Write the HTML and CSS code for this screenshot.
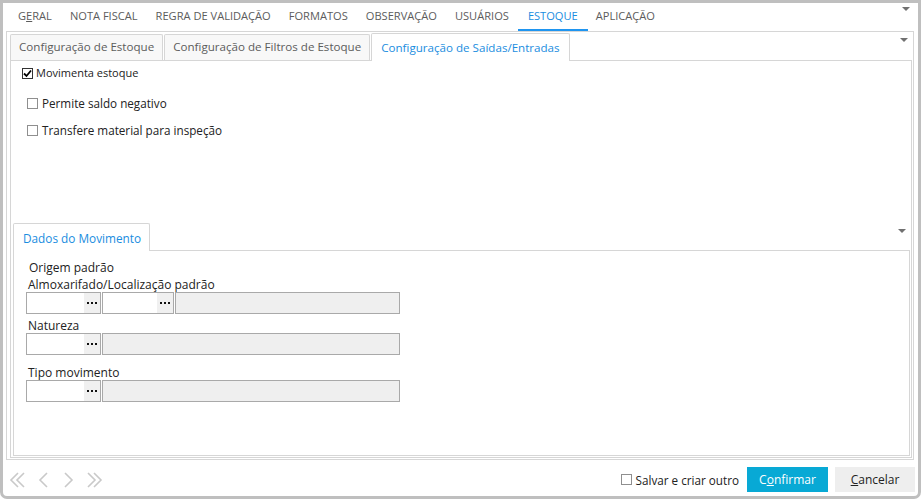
FILE: index.html
```html
<!DOCTYPE html>
<html lang="pt-BR">
<head>
    <meta charset="UTF-8">
    <meta name="viewport" content="width=device-width, initial-scale=1.0">
    <title>Estoque - Configuração</title>
    <link rel="stylesheet" href="styles.css">
</head>
<body>
    <div class="window">
        <div class="main-tabs">
            <span class="main-tab">G<u>E</u>RAL</span>
            <span class="main-tab">NOTA FISCAL</span>
            <span class="main-tab">REGRA DE VALIDAÇÃO</span>
            <span class="main-tab">FORMATOS</span>
            <span class="main-tab">OBSERVAÇÃO</span>
            <span class="main-tab">USUÁRIOS</span>
            <span class="main-tab active">ESTOQUE</span>
            <span class="main-tab">APLICAÇÃO</span>
            <span class="drop-arrow top"></span>
        </div>

        <div class="main-body">
            <div class="sub-tabs">
                <span class="sub-tab">Configuração de Estoque</span>
                <span class="sub-tab">Configuração de Filtros de Estoque</span>
                <span class="sub-tab active">Configuração de Saídas/Entradas</span>
                <span class="drop-arrow sub"></span>
            </div>

            <div class="sub-panel">
                <label class="check small">
                    <span class="box checked">
                        <svg width="9" height="9" viewBox="0 0 9 9"><path d="M1 4.5 L3.5 7 L8 1.5" fill="none" stroke="#000" stroke-width="1.8"/></svg>
                    </span>
                    Movimenta estoque
                </label>
                <label class="check indent">
                    <span class="box"></span>
                    Permite saldo negativo
                </label>
                <label class="check indent second">
                    <span class="box"></span>
                    Transfere material para inspeção
                </label>

                <div class="inner-tabs">
                    <span class="sub-tab active">Dados do Movimento</span>
                    <span class="drop-arrow inner"></span>
                </div>
                <div class="inner-panel">
                    <div class="field-title">Origem padrão</div>
                    <div class="field-label">Almoxarifado/Localização padrão</div>
                    <div class="field-row">
                        <div class="lookup"><span class="dots"><svg width="10" height="2" viewBox="0 0 10 2"><rect x="0" width="2" height="2"/><rect x="4" width="2" height="2"/><rect x="8" width="2" height="2"/></svg></span></div>
                        <div class="lookup narrow"><span class="dots"><svg width="10" height="2" viewBox="0 0 10 2"><rect x="0" width="2" height="2"/><rect x="4" width="2" height="2"/><rect x="8" width="2" height="2"/></svg></span></div>
                        <div class="readonly"></div>
                    </div>

                    <div class="field-label gap">Natureza</div>
                    <div class="field-row">
                        <div class="lookup"><span class="dots"><svg width="10" height="2" viewBox="0 0 10 2"><rect x="0" width="2" height="2"/><rect x="4" width="2" height="2"/><rect x="8" width="2" height="2"/></svg></span></div>
                        <div class="readonly"></div>
                    </div>

                    <div class="field-label gap-lg">Tipo movimento</div>
                    <div class="field-row">
                        <div class="lookup"><span class="dots"><svg width="10" height="2" viewBox="0 0 10 2"><rect x="0" width="2" height="2"/><rect x="4" width="2" height="2"/><rect x="8" width="2" height="2"/></svg></span></div>
                        <div class="readonly"></div>
                    </div>
                </div>
            </div>
        </div>

        <div class="footer">
            <div class="nav">
                <svg width="100" height="20" viewBox="0 0 100 20">
                    <g fill="none" stroke="#c9c9c9" stroke-width="1.6">
                        <path d="M9 3 L2 10 L9 17 M15 3 L8 10 L15 17"/>
                        <path d="M38 3 L31 10 L38 17"/>
                        <path d="M56 3 L63 10 L56 17"/>
                        <path d="M79 3 L86 10 L79 17 M85 3 L92 10 L85 17"/>
                    </g>
                </svg>
            </div>
            <label class="check save">
                <span class="box"></span>
                Salvar e criar outro
            </label>
            <button class="btn primary">C<u>o</u>nfirmar</button>
            <button class="btn"><u>C</u>ancelar</button>
        </div>
    </div>
</body>
</html>
```

FILE: styles.css
```css
:root {
    --frame: #bfbfbf;
    --line: #d6d6d6;
    --text: #222222;
    --text-muted: #5c5c5c;
    --blue: #1a8de0;
    --accent: #08a9d5;
    --field-border: #a9a9a9;
    --readonly: #efefef;
}

* {
    margin: 0;
    padding: 0;
    box-sizing: border-box;
}

body {
    font-family: 'Open Sans', 'Noto Sans', sans-serif;
    font-size: 11px;
    color: var(--text);
    background: #ffffff;
}

.window {
    width: 921px;
    height: 499px;
    border: 3px solid var(--frame);
    border-radius: 0 0 7px 7px;
    display: flex;
    flex-direction: column;
    position: relative;
}

/* top level tabs */
.main-tabs {
    height: 28px;
    display: flex;
    padding-left: 6px;
    position: relative;
}

.main-tab {
    padding: 0 9px;
    line-height: 26px;
    font-size: 11.1px;
    color: var(--text-muted);
    border-bottom: 2px solid transparent;
    white-space: nowrap;
}

.main-tab.active {
    color: var(--blue);
    border-bottom-color: #1f95f0;
    padding: 0 10px;
}

.main-tab.active + .main-tab {
    padding-left: 8px;
}

.drop-arrow {
    position: absolute;
    width: 0;
    height: 0;
    border-left: 4px solid transparent;
    border-right: 4px solid transparent;
    border-top: 4px solid #707070;
}

.drop-arrow.top {
    right: 8px;
    top: 4px;
}

.drop-arrow.sub {
    right: 4px;
    top: 6px;
}

.drop-arrow.inner {
    right: 4px;
    top: 7px;
}

.main-body {
    flex: 1;
    margin: 0 4px 0 3px;
    border: 1px solid var(--line);
    padding: 0 1px 1px 3px;
    display: flex;
    flex-direction: column;
}

/* second level tabs */
.sub-tabs,
.inner-tabs {
    height: 28px;
    display: flex;
    align-items: flex-end;
    position: relative;
}

.sub-tab {
    height: 26px;
    line-height: 24px;
    padding: 0 8px;
    border: 1px solid var(--line);
    border-bottom: none;
    border-radius: 2px 2px 0 0;
    background: #f8f8f8;
    color: var(--text-muted);
    margin-right: 1px;
    font-size: 11.6px;
    white-space: nowrap;
}

.sub-tab.active {
    height: 28px;
    line-height: 28px;
    background: #ffffff;
    color: var(--blue);
    margin-bottom: -1px;
    position: relative;
    padding: 0 9px;
}

.sub-panel {
    flex: 1;
    border: 1px solid var(--line);
    padding: 4px 1px 1px 2px;
    display: flex;
    flex-direction: column;
}

.check {
    display: flex;
    align-items: center;
    gap: 4px;
    font-size: 11.7px;
    color: var(--text);
    line-height: 16px;
}

.check.small {
    font-size: 11px;
    padding-left: 9px;
    gap: 3px;
}

.check.indent {
    padding-left: 14px;
    margin-top: 14px;
}

.check.second {
    margin-top: 11px;
}

.box {
    width: 11px;
    height: 11px;
    border: 1px solid #8f8f8f;
    background: #ffffff;
    display: flex;
    align-items: center;
    justify-content: center;
}

.box.checked {
    border-color: #333333;
}

.inner-tabs {
    margin-top: auto;
}

.inner-tabs .sub-tab {
    padding: 0 8px 0 9px;
    font-size: 11.8px;
}

.inner-panel {
    height: 206px;
    border: 1px solid var(--line);
    padding: 9px 0 0 12px;
}

.field-title {
    font-size: 12px;
    line-height: 16px;
    padding-left: 3px;
}

.field-label {
    font-size: 12px;
    line-height: 16px;
    padding-left: 2px;
    margin-top: 1px;
}

.field-label.gap {
    margin-top: 4px;
}

.field-label.gap-lg {
    margin-top: 10px;
}

.field-row {
    display: flex;
    gap: 1px;
    height: 22px;
    margin-top: -1px;
}

.lookup {
    width: 75px;
    border: 1px solid var(--field-border);
    background: #ffffff;
    display: flex;
    justify-content: flex-end;
}

.lookup.narrow {
    width: 72px;
}

.dots {
    width: 16px;
    background: #f0f0f0;
    display: flex;
    align-items: center;
    justify-content: center;
    fill: #111111;
}

.readonly {
    flex: 0 0 auto;
    width: 225px;
    border: 1px solid var(--field-border);
    background: var(--readonly);
}

.field-row .lookup + .readonly {
    width: 298px;
}

.field-row .narrow + .readonly {
    width: 225px;
}

/* footer */
.footer {
    height: 36px;
    display: flex;
    align-items: center;
    padding: 0 3px 0 6px;
}

.nav {
    display: flex;
    align-items: center;
    padding-top: 4px;
}

.check.save {
    margin-left: auto;
    margin-top: 3px;
    margin-right: 2px;
    gap: 4px;
}

.btn {
    font-family: inherit;
    font-size: 12px;
    height: 25px;
    width: 80px;
    border: none;
    background: #eeeeee;
    color: var(--text);
    margin-left: 7px;
    margin-top: 3px;
}

.btn.primary {
    width: 81px;
    margin-left: 6px;
    background: var(--accent);
    color: #ffffff;
}
```
